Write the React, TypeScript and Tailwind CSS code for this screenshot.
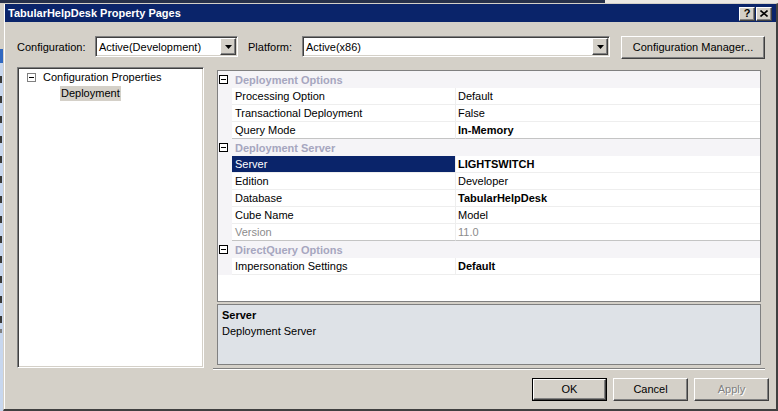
import React from "react";

type Row =
  | { cat: string }
  | { label: string; value: string; bold?: boolean; selected?: boolean; disabled?: boolean };

const ROWS: Row[] = [
  { cat: "Deployment Options" },
  { label: "Processing Option", value: "Default" },
  { label: "Transactional Deployment", value: "False" },
  { label: "Query Mode", value: "In-Memory", bold: true },
  { cat: "Deployment Server" },
  { label: "Server", value: "LIGHTSWITCH", bold: true, selected: true },
  { label: "Edition", value: "Developer" },
  { label: "Database", value: "TabularHelpDesk", bold: true },
  { label: "Cube Name", value: "Model" },
  { label: "Version", value: "11.0", disabled: true },
  { cat: "DirectQuery Options" },
  { label: "Impersonation Settings", value: "Default", bold: true },
];

const raised =
  "border border-t-white border-l-white border-r-[#404040] border-b-[#404040] shadow-[inset_-1px_-1px_#808080] bg-[#d4d0c8]";
const sunken =
  "border border-t-[#808080] border-l-[#808080] border-r-white border-b-white shadow-[inset_1px_1px_#404040,inset_-1px_-1px_#d4d0c8] p-px";

function MinusBox({ stroke }: { stroke: string }) {
  return (
    <svg width="9" height="9" viewBox="0 0 9 9" className="block">
      <rect x="0.5" y="0.5" width="8" height="8" fill="white" stroke={stroke} />
      <path d="M2 4.5h5" stroke="black" />
    </svg>
  );
}

function Combo({ text, className }: { text: string; className: string }) {
  return (
    <div className={`h-[21px] flex bg-white ${sunken} ${className}`}>
      <span className="flex-1 pl-[2px] pt-px leading-[16px] truncate">{text}</span>
      <div className={`w-[16px] h-[17px] flex items-center justify-center ${raised}`}>
        <svg width="7" height="4" viewBox="0 0 7 4">
          <path d="M0 0h7L3.5 4z" fill="black" />
        </svg>
      </div>
    </div>
  );
}

// strip of the window that sits behind the dialog
const BACK_MARKS = Array.from({ length: 13 });

export default function App() {
  return (
    <div className="w-[778px] h-[411px] flex flex-col overflow-hidden bg-[#d4d0c8] text-[11px] text-black font-['Liberation_Sans',Arial,sans-serif]">
      <div className="h-[3px] flex shrink-0">
        <div className="w-[605px] bg-[#26304a]" />
        <div className="flex-1 bg-[#ece9e4]" />
      </div>

      <div className="flex flex-1 min-h-0">
        {/* background window */}
        <div className="w-[3px] flex flex-col bg-[#c8d7ee]">
          <div className="h-[46px] bg-[#d4d0c8]" />
          <div className="h-[14px] bg-[#3168c0]" />
          <div className="flex flex-col pt-[6px]">
            {BACK_MARKS.map((_, i) => (
              <div key={i} className="h-[20px] flex items-center">
                <div className="w-[2px] h-[7px] bg-[#3a3a3a]" />
              </div>
            ))}
          </div>
          <div className="h-[4px] w-[2px] bg-[#808080]" />
        </div>

        {/* dialog */}
        <div className="flex-1 flex flex-col border-t border-l border-t-[#d4d0c8] border-l-[#d4d0c8] border-r-2 border-b-2 border-r-[#404040] border-b-[#404040] shadow-[inset_1px_1px_white] pl-px">
          {/* Title bar */}
          <div className="h-[18px] shrink-0 flex items-center bg-[#0a246a] pl-[3px] pr-[4px]">
            <span className="flex-1 font-bold text-white pt-px">TabularHelpDesk Property Pages</span>
            <div className="flex gap-[1px] mt-[1px]">
              <div className={`w-[16px] h-[14px] flex items-center justify-center font-bold text-[11px] leading-none ${raised}`}>
                ?
              </div>
              <div className={`w-[16px] h-[14px] flex items-center justify-center ${raised}`}>
                <svg width="8" height="7" viewBox="0 0 8 7">
                  <path d="M0.5 0.5L7.5 6.5M7.5 0.5L0.5 6.5" stroke="black" strokeWidth="1.6" />
                </svg>
              </div>
            </div>
          </div>

          {/* Body */}
          <div className="flex-1 flex flex-col pl-[12px] pr-[7px]">
            {/* Configuration row */}
            <div className="mt-[14px] h-[23px] flex items-start pr-[4px]">
              <span className="w-[78px] leading-[21px] pt-px">Configuration:</span>
              <Combo text="Active(Development)" className="w-[143px]" />
              <span className="ml-[10px] w-[54px] leading-[21px] pt-px">Platform:</span>
              <Combo text="Active(x86)" className="w-[308px]" />
              <div className={`ml-[11px] w-[144px] h-[23px] flex items-center justify-center ${raised}`}>
                Configuration Manager...
              </div>
            </div>

            {/* Tree + grid */}
            <div className="mt-[8px] h-[303px] flex pr-[4px]">
              <div className={`w-[187px] h-[301px] bg-white ${sunken}`}>
                <div className="h-[16px] flex items-center pl-[8px]">
                  <MinusBox stroke="#808080" />
                  <span className="ml-[7px]">Configuration Properties</span>
                </div>
                <div className="h-[16px] flex items-end pl-[41px]">
                  <span className="h-[15px] leading-[15px] px-[1px] bg-[#d4d0c8]">Deployment</span>
                </div>
              </div>

              <div className="ml-[9px] flex-1 flex flex-col pt-[3px]">
                <div className="pl-[4px]">
                  <div className="w-[544px] h-[232px] border border-[#808080] bg-white flex flex-col">
                    {ROWS.map((r, i) => {
                      if ("cat" in r) {
                        return (
                          <div key={i} className="h-[17px] shrink-0 flex items-center bg-[#f5f4f7]">
                            <div className="w-[14px] pl-[1px]">
                              <MinusBox stroke="#000000" />
                            </div>
                            <span className="pl-[3px] pt-px font-bold text-[#a6a6bf]">{r.cat}</span>
                          </div>
                        );
                      }
                      const next = ROWS[i + 1];
                      const line = next && "cat" in next ? "border-b-[#c4c4c4]" : "border-b-[#eeeeee]";
                      const tone = r.disabled ? "text-[#8c8c8c]" : "";
                      return (
                        <div key={i} className="h-[17px] shrink-0 flex">
                          <div className="w-[14px] bg-[#f5f4f7]" />
                          <div
                            className={`w-[223px] border-b ${line} pl-[3px] pt-px leading-[15px] ${
                              r.selected ? "bg-[#0a246a] text-white" : tone
                            }`}
                          >
                            {r.label}
                          </div>
                          <div
                            className={`flex-1 border-l border-l-[#eeeeee] border-b ${line} pl-[2px] pt-px leading-[15px] ${tone} ${
                              r.bold ? "font-bold" : ""
                            }`}
                          >
                            {r.value}
                          </div>
                        </div>
                      );
                    })}
                  </div>

                  <div className="mt-[2px] w-[544px] h-[61px] border border-[#808080] bg-[#dee2e7] px-[4px] pt-[2px] leading-[16px]">
                    <div className="font-bold">Server</div>
                    <div>Deployment Server</div>
                  </div>
                </div>
                <div className="mt-[3px] h-[2px] border-t border-t-[#808080] border-b border-b-white" />
              </div>
            </div>

            {/* Buttons */}
            <div className="mt-[8px] h-[23px] flex justify-end gap-[6px]">
              <div className="w-[75px] h-[23px] border border-black flex">
                <div className={`flex-1 flex items-center justify-center ${raised}`}>OK</div>
              </div>
              <div className={`w-[75px] h-[23px] flex items-center justify-center ${raised}`}>Cancel</div>
              <div
                className={`w-[75px] h-[23px] flex items-center justify-center text-[#808080] [text-shadow:1px_1px_0_#ffffff] ${raised}`}
              >
                Apply
              </div>
            </div>
          </div>
        </div>
      </div>
    </div>
  );
}
